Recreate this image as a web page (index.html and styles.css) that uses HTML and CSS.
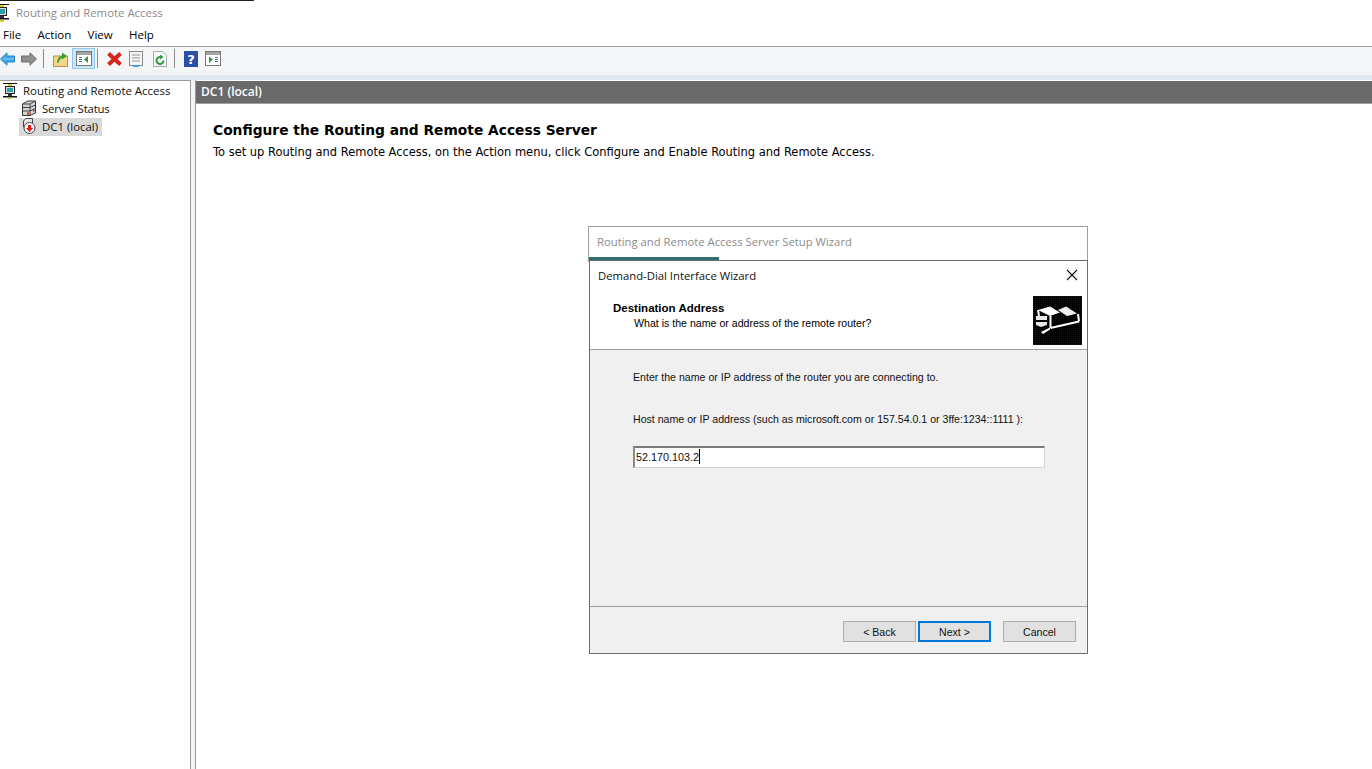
FILE: index.html
```html
<!DOCTYPE html>
<html lang="en">
<head>
    <meta charset="UTF-8">
    <title>Routing and Remote Access</title>
    <link rel="stylesheet" href="styles.css">
</head>
<body>

    <div class="topline"></div>

    <header class="titlebar">
        <svg class="app-icon" width="16" height="18" viewBox="0 0 16 18"><path d="M1 .5H15" stroke="#111"/><rect x="6" y="1" width="4" height="2" fill="#d8d020"/><rect x="3.500" y="3.500" width="9" height="8" fill="#ddd" stroke="#222"/><rect x="5" y="5" width="6" height="5" fill="#2aa0a8"/><rect x="6" y="12" width="4" height="2" fill="#333"/><rect x="1" y="14" width="14" height="1.500" fill="#111"/><rect x="6" y="16" width="4" height="2" fill="#d8d020"/></svg>
        <span>Routing and Remote Access</span>
    </header>

    <nav class="menubar">
        <span>File</span>
        <span>Action</span>
        <span>View</span>
        <span>Help</span>
    </nav>

    <div class="toolbar">
        <span class="tool first"><svg width="15" height="14" viewBox="0 0 15 14"><path d="M.5 7 7 .8V4H14.500V10H7V13.200Z" fill="#3ea6e4" stroke="#2a86c4"/><path d="M3 7H14" stroke="#8fd0f4"/></svg></span>
        <span class="tool"><svg width="16" height="14" viewBox="0 0 16 14"><path d="M15.500 7 9 .8V4H.5V10H9V13.200Z" fill="#8e8e8e" stroke="#6e6e6e"/></svg></span>
        <i class="sep"></i>
        <span class="tool"><svg width="15" height="16" viewBox="0 0 15 16"><path d="M.5 5H14.500V15.500H.5Z" fill="#f3d68a" stroke="#b4934a"/><path d="M4 11C5 6 7 5 9 5V1.500L14 5 9 8.500V7C7.500 7.500 6.500 9 5.500 12Z" fill="#3aa03a"/></svg></span>
        <span class="tool tool-on">
            <svg width="16" height="15" viewBox="0 0 16 15"><rect x=".5" y=".5" width="15" height="14" fill="#fff" stroke="#777"/><rect x="1" y="1" width="14" height="3" fill="#a4a4a4"/><rect x="3" y="6" width="3" height="1" fill="#4a6a9a"/><rect x="3" y="8" width="3" height="1" fill="#4a6a9a"/><rect x="3" y="10" width="3" height="1" fill="#4a6a9a"/><path d="M8 8.500 12 5V12Z" fill="#2a9a3a"/></svg>
        </span>
        <i class="sep after-on"></i>
        <span class="tool"><svg width="17" height="16" viewBox="0 0 17 16"><path d="M2.500 2.500 14.500 13.500M14.500 2.500 2.500 13.500" stroke="#d8261c" stroke-width="4"/></svg></span>
        <span class="tool"><svg width="16" height="16" viewBox="0 0 16 16"><rect x="1.500" y=".5" width="13" height="14" fill="#f4f4f4" stroke="#888"/><path d="M4 4H12M4 7H12M4 10H12" stroke="#999"/><rect x="5" y="14" width="6" height="2" fill="#3aa0e0"/></svg></span>
        <span class="tool gap-left"><svg width="14" height="16" viewBox="0 0 14 16"><path d="M.5 .5H9.500L13.500 4V15.500H.5Z" fill="#fafafa" stroke="#aaa"/><path d="M10.500 9.500A3.500 3.500 0 1 1 7.500 6" fill="none" stroke="#2f9a3f" stroke-width="2"/><path d="M7 3.500 10.500 6 7 8.500Z" fill="#2f9a3f"/></svg></span>
        <i class="sep"></i>
        <span class="tool"><svg width="14" height="16" viewBox="0 0 14 16"><rect width="14" height="16" fill="#2b4fa8"/><text x="7" y="13" class="help-mark">?</text></svg></span>
        <span class="tool"><svg width="16" height="15" viewBox="0 0 16 15"><rect x=".5" y=".5" width="15" height="14" fill="#fff" stroke="#777"/><rect x="1" y="1" width="14" height="3" fill="#a4a4a4"/><path d="M4 5.500 8 8.500 4 12Z" fill="#2a9a3a"/><rect x="10" y="6" width="3" height="1" fill="#4a6a9a"/><rect x="10" y="8" width="3" height="1" fill="#4a6a9a"/><rect x="10" y="10" width="3" height="1" fill="#4a6a9a"/></svg></span>
    </div>

    <div class="strip"></div>

    <main class="panes">
        <aside class="tree">
            <div class="tree-row root">
                <svg width="16" height="16" viewBox="0 0 16 16"><path d="M1 .5H15" stroke="#111"/><rect x="6" y="1" width="4" height="2" fill="#d8d020"/><rect x="3.500" y="3.500" width="9" height="7" fill="#ddd" stroke="#222"/><rect x="5" y="5" width="6" height="4" fill="#2aa0a8"/><rect x="6" y="11" width="4" height="2" fill="#333"/><rect x="1" y="13" width="14" height="1.500" fill="#111"/><rect x="6" y="14.500" width="4" height="1.500" fill="#d8d020"/></svg>
                <span>Routing and Remote Access</span>
            </div>
            <div class="tree-row child">
                <svg width="16" height="16" viewBox="0 0 16 16"><path d="M1.500 4 7 1H14.500V13L9 15.500H1.500Z" fill="#d4d4d4" stroke="#333"/><path d="M1.500 4H9V15M9 4 14.500 1M1.500 7.500H9M1.500 11H9M9 7.500 14.500 5M9 11 14.500 8.500" fill="none" stroke="#444"/><rect x="6" y="12.500" width="2" height="2" fill="#d22"/><rect x="12" y="10" width="1.500" height="1.500" fill="#d22"/></svg>
                <span class="status-label">Server Status</span>
            </div>
            <div class="tree-row child selected">
                <svg width="16" height="16" viewBox="0 0 16 16"><path d="M2.500 3 5 .5H11.500V9H2.500Z" fill="#e4e4e4" stroke="#444"/><circle cx="8.500" cy="10" r="5.500" fill="#fff" stroke="#444"/><path d="M8.500 14 5 10H7V7H10V10H12Z" fill="#e01818"/></svg>
                <span>DC1 (local)</span>
            </div>
        </aside>

        <div class="pane-gap"></div>

        <section class="content">
            <div class="content-head">DC1 (local)</div>
            <h1>Configure the Routing and Remote Access Server</h1>
            <p>To set up Routing and Remote Access, on the Action menu, click Configure and Enable Routing and Remote Access.</p>
        </section>
    </main>

    <!-- Setup wizard behind the dialog -->
    <div class="setup-window">
        <div class="setup-title">Routing and Remote Access Server Setup Wizard</div>
        <div class="setup-progress"></div>
    </div>

    <!-- Demand-dial dialog -->
    <div class="dialog">
        <div class="dialog-title">
            <span>Demand-Dial Interface Wizard</span>
            <svg class="close" width="12" height="12" viewBox="0 0 12 12"><path d="M1 1 11 11M11 1 1 11" stroke="#111" stroke-width="1.100"/></svg>
        </div>
        <div class="dialog-head">
            <div class="head-text">
                <h2>Destination Address</h2>
                <p>What is the name or address of the remote router?</p>
            </div>
            <svg class="wizard-art" width="49" height="49" viewBox="0 0 49 49">
                <defs>
                    <pattern id="edge-dots" width="2" height="2" patternUnits="userSpaceOnUse"><rect width="2" height="2" fill="#000"/><rect width="1" height="1" fill="#0000ff"/></pattern>
                    <pattern id="dots" width="2" height="2" patternUnits="userSpaceOnUse"><rect width="2" height="2" fill="#000"/><rect width="1" height="1" fill="#000090"/></pattern>
                </defs>
                <rect width="49" height="49" fill="url(#edge-dots)"/>
                <rect x="4" y="4" width="41" height="41" fill="url(#dots)"/>
                <path d="M5 14 17 10.500 27 16.500 17 20Z" fill="#fff"/>
                <path d="M25 14 33 10.500 44 17.500 34 20Z" fill="#f0f0f0"/>
                <path d="M17.500 20V32M45 18 46 25.500M17.500 32 46 25.500M5 14 6 20" fill="none" stroke="#fff" stroke-width="2"/>
                <path d="M3 20H14V24H3ZM3 26H14V29L8 31 3 29Z" fill="#e8e8e8"/>
                <path d="M8 36 17 31.500V33.500L10 38Z" fill="#fff"/>
            </svg>
        </div>
        <div class="dialog-body">
            <div class="form-area">
                <p class="lead">Enter the name or IP address of the router you are connecting to.</p>
                <label for="host">Host name or IP address (such as microsoft.com or 157.54.0.1 or 3ffe:1234::1111 ):</label>
                <div class="field" id="host"><span>52.170.103.2</span><i class="caret"></i></div>
            </div>
            <div class="dialog-foot">
                <button>&lt; Back</button>
                <button class="primary">Next &gt;</button>
                <button class="cancel">Cancel</button>
            </div>
        </div>
    </div>

</body>
</html>
```

FILE: styles.css
```css
/* General */
html, body {
    margin: 0;
    padding: 0;
    height: 769px;
    overflow: hidden;
    background: #fff;
    font-family: "Open Sans", "Noto Sans", sans-serif;
    font-size: 11.400px;
    color: #000;
}

.topline {
    width: 254px;
    height: 1px;
    background: #222;
}

/* Title and menu */
.titlebar {
    height: 24px;
    box-sizing: border-box;
    padding-bottom: 1px;
    display: flex;
    align-items: center;
    gap: 6px;
    color: #8c8c8c;
    overflow: hidden;
}

.app-icon {
    margin-left: -6px;
    flex-shrink: 0;
}

.menubar {
    height: 21px;
    box-sizing: border-box;
    height: 22px;
    display: flex;
    align-items: center;
    gap: 16.300px;
    padding: 0 0 2px 3px;
    font-size: 11.500px;
    border-bottom: 1px solid #a0a0a0;
}

/* Toolbar */
.toolbar {
    height: 23px;
    display: flex;
    align-items: center;
    background: #f5f6f7;
}

.tool {
    width: 22px;
    height: 21px;
    flex-shrink: 0;
    display: flex;
    align-items: center;
    justify-content: center;
}

.tool.first {
    margin-left: -4px;
}

.tool.gap-left {
    margin-left: 2px;
}

.sep {
    width: 1px;
    height: 19px;
    flex-shrink: 0;
    background: #8a8a8a;
    margin: 0 5px 0 3px;
}

.sep.after-on {
    margin-left: 2px;
}

.tool-on {
    width: 23px;
    margin-left: 1px;
    box-sizing: border-box;
    background: #cde6f7;
    border: 1px solid #92c8ee;
}

.help-mark {
    fill: #fff;
    font-family: "DejaVu Sans", sans-serif;
    font-size: 13px;
    font-weight: bold;
    text-anchor: middle;
}

.strip {
    height: 10px;
    background: linear-gradient(#f2f4f6, #f2f4f6 50%, #dfe8f2 50%);
}

/* Panes */
.panes {
    display: flex;
    height: 689px;
}

.tree {
    width: 191px;
    flex-shrink: 0;
    box-sizing: border-box;
    border-right: 1px solid #9a9a9a;
    border-top: 1px solid #9a9a9a;
    padding-top: 2px;
}

.tree-row {
    display: flex;
    align-items: center;
    height: 18px;
    box-sizing: border-box;
    padding-bottom: 2px;
    gap: 5px;
    color: #111;
}

.tree-row.root {
    height: 17px;
    padding-left: 2px;
    font-size: 11.450px;
}

.tree-row.child {
    padding-left: 21px;
}

.status-label {
    letter-spacing: -0.2px;
}

.tree-row.selected {
    margin-left: 19px;
    padding-left: 2px;
    padding-right: 4px;
    width: max-content;
    background: #d9d9d9;
}

.pane-gap {
    width: 4px;
    flex-shrink: 0;
    background: #f2f5f8;
}

.content {
    flex: 1;
    border-left: 1px solid #9a9a9a;
    padding-top: 1px;
}

.content-head {
    height: 23px;
    box-sizing: border-box;
    background: #6a6a6a;
    border-bottom: 1px solid #a0a0a0;
    color: #fff;
    font-size: 12px;
    font-weight: 600;
    line-height: 21px;
    padding-left: 5px;
}

.content h1 {
    margin: 18px 0 0 17px;
    font-family: "DejaVu Sans", sans-serif;
    font-size: 13.800px;
    line-height: 17px;
    font-weight: bold;
}

.content p {
    margin: 7px 0 0 17px;
    font-family: "DejaVu Sans", sans-serif;
    font-size: 11.460px;
    line-height: 13px;
}

/* Setup wizard window */
.setup-window {
    position: absolute;
    left: 588px;
    top: 226px;
    width: 500px;
    height: 36px;
    box-sizing: border-box;
    background: #fff;
    border: 1px solid #a0a0a0;
    border-bottom: none;
}

.setup-title {
    height: 30px;
    line-height: 30px;
    padding-left: 8px;
    color: #8c8c8c;
    font-size: 11.300px;
}

.setup-progress {
    width: 130px;
    height: 3px;
    background: #2f6f70;
}

/* Dialog */
.dialog {
    position: absolute;
    left: 589px;
    top: 260px;
    width: 499px;
    height: 394px;
    box-sizing: border-box;
    display: flex;
    flex-direction: column;
    background: #fff;
    border: 1px solid #6d6d6d;
}

.dialog-title {
    height: 29px;
    flex-shrink: 0;
    display: flex;
    align-items: center;
    justify-content: space-between;
    padding: 0 9px 0 8px;
    font-size: 11.300px;
    color: #111;
}

.close {
    margin-top: -2px;
}

.dialog-head {
    height: 60px;
    flex-shrink: 0;
    display: flex;
    justify-content: space-between;
    box-sizing: border-box;
    border-bottom: 1px solid #a0a0a0;
    padding: 6px 5px 0 23px;
    font-family: "Liberation Sans", sans-serif;
    font-size: 10.600px;
}

.head-text h2 {
    margin: 6px 0 0 0;
    font-size: 11.500px;
    line-height: 13px;
    font-weight: bold;
}

.head-text p {
    margin: 2px 0 0 21px;
    line-height: 13px;
}

.wizard-art {
    flex-shrink: 0;
}

.dialog-body {
    flex: 1;
    display: flex;
    flex-direction: column;
    background: #f0f0f0;
    font-family: "Liberation Sans", sans-serif;
    font-size: 10.600px;
    color: #111;
}

.form-area {
    flex: 1;
    padding: 21px 43px 0 43px;
}

.lead {
    margin: 0;
    line-height: 13px;
}

.form-area label {
    display: block;
    margin-top: 29px;
    line-height: 13px;
}

.field {
    margin-top: 20px;
    height: 22px;
    width: 412px;
    box-sizing: border-box;
    background: #fff;
    border: 1px solid #d0d0d0;
    border-top: 2px solid #7a7a7a;
    border-left: 2px solid #8a8a8a;
    display: flex;
    align-items: center;
    padding: 0 0 2px 1px;
    font-size: 10.800px;
}

.caret {
    width: 1px;
    height: 15px;
    background: #000;
}

.dialog-foot {
    height: 47px;
    box-sizing: border-box;
    flex-shrink: 0;
    display: flex;
    align-items: flex-start;
    padding: 14px 11px 0 0;
    justify-content: flex-end;
    gap: 2px;
    border-top: 1px solid #a0a0a0;
}

.dialog-foot button {
    width: 73px;
    height: 21px;
    box-sizing: border-box;
    padding: 0;
    background: #e1e1e1;
    border: 1px solid #adadad;
    border-radius: 0;
    font-family: "Liberation Sans", sans-serif;
    font-size: 10.600px;
    color: #111;
}

.dialog-foot .primary {
    border: 2px solid #0078d7;
}

.dialog-foot .cancel {
    margin-left: 10px;
}
```
